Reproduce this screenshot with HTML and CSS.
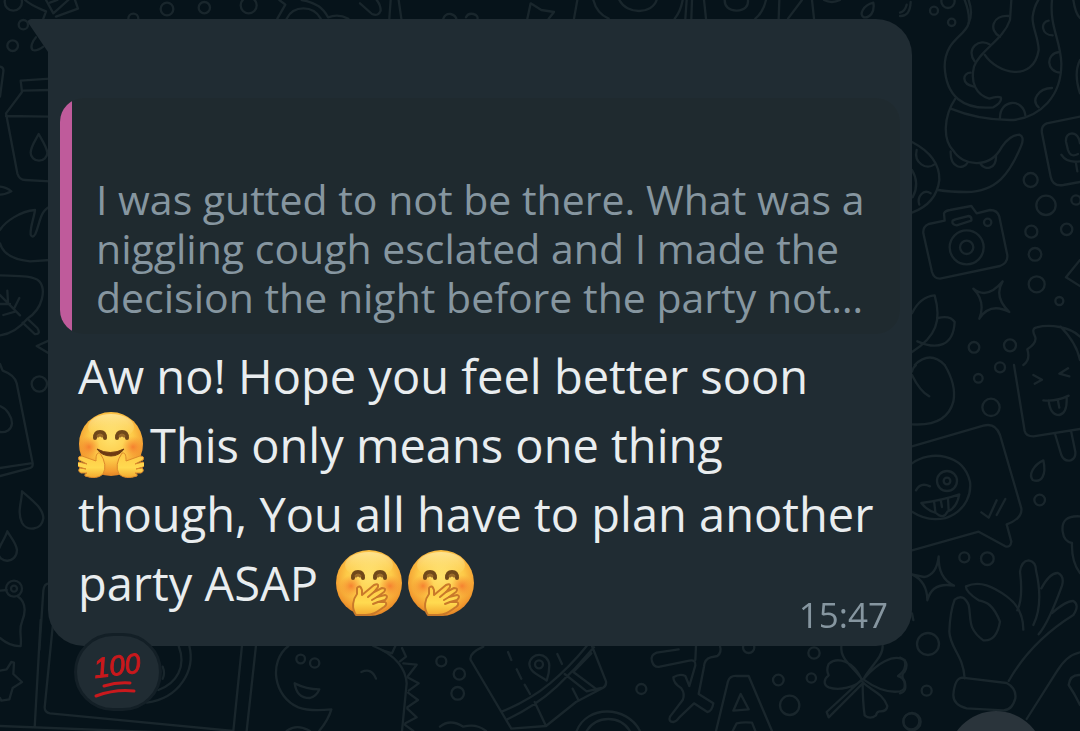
FILE: index.html
```html
<!DOCTYPE html>
<html lang="en">
<head>
  <meta charset="UTF-8"/>
  <meta name="viewport" content="width=device-width, initial-scale=1.0"/>
  <title>Chat</title>
  <link rel="stylesheet" href="styles.css">
</head>
<body>
  <!-- doodle wallpaper -->
  <svg class="wallpaper" viewBox="0 0 3240 2193" preserveAspectRatio="xMidYMid slice" aria-hidden="true">
    <!-- top left -->
    <g>
      <circle cx="40" cy="6" r="26"/><circle cx="70" cy="74" r="14"/><circle cx="38" cy="137" r="16"/>
      <path d="M75 0C95 18 115 24 138 34L130 56M138 0L160 40L205 0M150 8L172 0M225 0L234 26L168 50"/>
      <path d="M108 112C96 125 90 142 98 150C110 154 122 146 130 140"/>
      <circle cx="400" cy="56" r="15"/><circle cx="501" cy="27" r="19"/><circle cx="613" cy="23" r="17"/><circle cx="746" cy="16" r="24"/>
      <path d="M838 0L856 14L832 56M860 56C880 15 940 15 962 56M905 0C950 8 970 25 984 52C1010 42 1030 48 1045 56"/>
      <path d="M0 200Q12 202 10 215L0 290"/>
      <path d="M150 236L62 242L66 276L18 340L52 520Q58 540 76 540L150 544M66 272L150 270M18 348L150 350"/>
      <path d="M116 402C104 425 92 440 92 458A25 24 0 0 0 142 458C140 440 126 420 116 402Z"/>
      <path d="M0 560Q20 562 34 574Q16 584 0 584"/>
    </g>
    <!-- top middle -->
    <g transform="translate(1080 0)">
      <path d="M0 10L36 42Q56 50 62 32Q62 15 50 0M92 0L88 56M116 0L124 56M250 56Q256 40 272 42Q288 46 290 60M318 52Q324 38 340 42Q356 46 352 60"/>
      <path d="M502 56L512 10L544 30L582 36L566 56M652 0L642 56M700 0Q710 40 746 56M778 0C800 44 876 44 890 0M968 0Q962 34 944 56M980 0L976 56M996 0L994 56M1032 0L1038 56"/>
      <path d="M1094 0Q1094 30 1130 32Q1166 30 1164 0M1218 0Q1210 36 1186 56M1258 0L1256 56M1326 0L1284 56M1356 0L1362 56M1392 0Q1415 12 1440 0M1540 8C1510 15 1495 45 1512 52C1530 54 1545 36 1540 8Z"/>
    </g>
    <!-- left edge -->
    <g transform="translate(0 600)">
      <path d="M150 20C120 32 120 70 106 102Q98 116 92 104C90 80 102 55 105 30C60 34 15 65 0 90M0 130C10 165 50 180 90 184L150 180"/>
      <path d="M0 226C50 228 100 226 118 244C138 268 130 325 82 356C58 385 30 402 0 406M82 356L112 384Q124 404 104 402L68 368M0 285L60 346M24 306L22 272M42 326L58 294M0 312L30 312M10 345L48 334"/>
      <path d="M146 422L110 438L146 460"/><circle cx="118" cy="552" r="23"/>
      <path d="M0 492L8 512C30 520 45 530 50 550L98 790Q100 804 84 806L0 828M0 804Q50 796 92 790M0 618C20 625 36 650 36 670C34 690 18 698 0 696"/>
      <path d="M66 874C66 905 50 935 66 968C80 995 124 992 130 955C130 925 96 900 66 874Z"/>
      <path d="M22 994C14 1018 -4 1040 -6 1056C-4 1092 50 1092 51 1050C48 1028 32 1012 22 994Z"/>
      <circle cx="42" cy="1166" r="24"/><circle cx="42" cy="1166" r="9"/>
      <path d="M0 1172L20 1170M52 1188C78 1206 78 1235 66 1265C55 1290 66 1310 62 1338Q30 1340 0 1314"/>
      <path d="M148 1150Q132 1150 130 1172L118 1350"/>
    </g>
    <!-- bottom left -->
    <g transform="translate(0 1860)">
      <path d="M122 0L104 322M158 20L134 262Q134 278 150 280L700 333M0 318L560 340M700 333L726 76M740 333L768 76"/>
      <path d="M0 152L20 148L34 126L42 128L40 162L66 186L38 204L28 238L4 242L0 234"/>
      <path d="M536 78C560 140 530 190 475 210M568 78C586 150 540 235 440 248M488 140Q496 160 488 176"/>
      <path d="M865 78C805 125 820 230 895 262Q930 275 994 268Q985 300 958 332M1120 78C1190 105 1218 150 1220 190L1206 333"/>
      <circle cx="902" cy="117" r="13"/><circle cx="944" cy="129" r="14"/>
      <path d="M884 190Q890 235 930 234Q950 228 958 208Q920 208 884 190ZM1084 156Q1115 142 1128 176"/>
      <path d="M1150 92L1176 100L1186 78M1206 84L1218 110L1200 124M1210 130L1250 134L1224 168M1222 172L1256 190L1226 212M1224 218L1254 240L1222 262M1222 266L1250 292L1216 310M1214 314L1240 333"/>
      <path d="M860 333Q890 310 930 333"/>
      <circle cx="1324" cy="124" r="15"/><circle cx="1378" cy="162" r="17"/><circle cx="1373" cy="220" r="19"/>
    </g>
    <!-- bottom middle -->
    <g transform="translate(1320 1860)">
      <path d="M130 80Q86 100 92 120L214 326L318 318L408 246L488 204Q500 198 498 184L456 78M185 275Q270 240 330 190T440 78M202 298Q290 256 350 200T462 82M374 162L440 214L484 204M400 156L454 100M400 156L470 208M318 318Q300 280 284 246M204 96L214 120M230 148L244 176M254 194L270 222M352 102L366 132M398 206L414 238"/>
      <path d="M320 182C300 165 270 160 268 132C272 95 325 95 328 136Q328 160 320 182Z"/><circle cx="297" cy="133" r="12"/>
      <path d="M410 333C440 255 560 255 600 333M440 333C470 285 540 285 570 333M0 320Q30 295 70 320Q110 310 138 333"/>
      <circle cx="604" cy="207" r="15"/>
      <path d="M716 88L650 98Q630 105 636 124Q642 144 660 140L748 122Q768 118 766 136L748 198L736 168Q720 160 700 172Q700 190 724 205Q736 222 728 240L690 290Q684 306 700 306Q710 304 718 292L762 250L802 276Q816 274 820 250L776 222L792 140Q794 116 812 112L832 108Q846 98 840 78"/>
      <path d="M828 333L864 184Q870 166 890 168L926 168L996 333M902 222L880 272L926 268ZM878 333L890 310Q910 305 936 308L946 333M768 78L766 120"/>
      <circle cx="1015" cy="180" r="16"/><circle cx="1114" cy="174" r="14"/><circle cx="1122" cy="99" r="17"/><circle cx="1049" cy="256" r="29"/><circle cx="926" cy="82" r="17"/><circle cx="1414" cy="304" r="24"/>
      <path d="M1266 178L1160 276L1166 292L1268 190M1266 178C1240 140 1200 120 1204 78M1270 178C1290 140 1330 110 1328 78M1266 180C1240 120 1190 110 1166 132Q1158 150 1166 166C1150 178 1150 195 1166 202C1200 214 1245 200 1266 180M1270 178C1310 130 1360 100 1394 120Q1402 150 1374 168C1400 175 1400 210 1380 214C1340 220 1300 200 1270 178M1268 186C1268 220 1270 260 1274 286Q1290 300 1308 286Q1310 275 1318 274Q1340 276 1342 258C1330 220 1290 210 1268 186"/>
    </g>
    <!-- top right -->
    <g transform="translate(2700 0)">
      <path d="M0 48Q30 50 32 6M0 38Q15 34 20 14"/>
      <circle cx="102" cy="32" r="12"/><circle cx="144" cy="4" r="20"/><circle cx="155" cy="67" r="11"/>
      <path d="M194 0Q210 40 206 70C195 110 134 120 134 200C138 290 190 330 280 322Q308 305 302 292Q290 288 268 296C230 285 210 250 222 200C240 150 310 120 330 60L334 0"/>
      <path d="M206 70Q220 40 206 0M254 164C290 220 400 250 416 150C415 110 395 80 398 50Q402 20 415 0M456 0C448 80 482 120 484 190C485 290 420 350 340 360Q240 362 152 326M166 296C130 350 128 420 160 452C190 500 270 508 306 440Q330 405 358 404Q374 410 364 436C330 520 290 575 200 576Q150 576 114 570"/>
      <path d="M326 48C278 44 264 90 300 110M270 134C240 112 195 145 224 184M212 218C188 218 182 252 222 260M446 62C420 65 424 106 458 106M478 156C436 160 438 216 482 218M456 264C415 265 392 300 416 322M300 356C298 296 370 294 376 346M152 454C150 505 190 512 204 486M242 492C255 512 290 508 288 466"/>
      <path d="M36 426Q120 470 118 540Q110 610 36 638M50 450C40 490 80 510 102 494M36 510Q60 550 38 592M92 580C70 566 50 590 58 614"/>
      <path d="M540 350L440 370Q422 378 426 400L452 530Q458 560 490 555L540 546M516 400Q496 402 498 425L504 450Q512 474 534 462M516 400Q536 402 540 430M484 464Q500 490 540 484M528 490L532 514M520 0Q526 40 540 54M540 180Q520 220 540 280"/>
      <path d="M134 662L132 640Q136 632 150 630L214 618L230 640L270 630Q292 630 298 650L322 766Q324 788 300 798L120 836Q102 836 96 816L70 700Q68 680 86 672ZM166 658L206 648Q216 650 214 662L170 676Q154 674 158 662Z"/>
      <circle cx="200" cy="742" r="51"/><circle cx="200" cy="742" r="20"/><circle cx="263" cy="667" r="11"/>
      <circle cx="392" cy="540" r="21"/><circle cx="438" cy="616" r="29"/><circle cx="394" cy="695" r="18"/><circle cx="500" cy="688" r="17"/><circle cx="528" cy="600" r="14"/><circle cx="405" cy="763" r="19"/><circle cx="410" cy="853" r="24"/><circle cx="478" cy="903" r="12"/><circle cx="222" cy="1042" r="16"/><circle cx="330" cy="1036" r="18"/><circle cx="300" cy="1102" r="15"/>
      <path d="M220 866Q262 900 308 844Q280 890 328 936Q270 906 238 956Q258 905 220 866ZM540 780L498 832L540 858"/>
      <path d="M36 940Q60 890 104 886C125 960 110 1010 36 1056M114 954Q150 945 164 966C160 1040 110 1050 52 1024M44 1095Q90 1050 134 1095"/>
      <path d="M370 1095Q392 1080 382 1048Q410 1030 406 1012Q392 985 410 982C450 972 510 980 540 1010M482 980Q530 1030 540 1080"/>
    </g>
    <!-- bottom right -->
    <g transform="translate(2700 1095)">
      <path d="M36 30Q60 80 88 94M134 0Q170 60 160 110Q140 185 36 178M36 20Q38 8 48 0"/>
      <circle cx="235" cy="40" r="13"/><circle cx="273" cy="127" r="26"/><circle cx="193" cy="577" r="15"/><circle cx="262" cy="581" r="19"/><circle cx="419" cy="405" r="16"/><circle cx="84" cy="837" r="33"/><circle cx="80" cy="977" r="15"/><circle cx="36" cy="1070" r="26"/>
      <path d="M342 0L374 198Q378 214 400 214L540 192M400 30L426 44L404 56M504 10L478 26L508 34M430 106Q470 110 506 92M446 106Q450 150 478 150Q502 145 500 98M474 108L478 128M466 210L484 270Q492 290 512 286Q528 280 526 260L514 202"/>
      <path d="M36 244L250 182Q286 172 300 210L364 430Q368 460 320 478L334 530Q332 548 316 544L236 500L36 556"/>
      <path d="M36 295C90 255 190 265 210 350C220 430 130 500 36 440"/>
      <circle cx="141" cy="348" r="30"/><circle cx="141" cy="348" r="10"/>
      <path d="M48 376Q62 350 90 364M64 414Q130 405 178 388Q170 430 142 440Q130 465 108 444Q80 436 64 414ZM102 408L106 440M122 404L126 426M144 400L146 438M244 442L266 458L290 406M290 450L316 402"/>
      <path d="M430 286C400 300 385 330 398 345C425 355 440 330 430 286Z"/>
      <path d="M36 628L72 636Q110 630 116 574Q114 640 162 662Q96 650 82 706Q82 650 36 628Z"/>
      <path d="M194 940C190 870 150 850 148 800Q150 740 164 704Q190 684 206 720C215 760 200 790 250 826Q290 830 300 770C280 720 260 710 236 706Q196 680 198 664C240 645 280 665 320 694Q370 730 370 794"/>
      <path d="M352 736Q370 700 360 620Q364 588 386 586Q408 590 408 616C425 690 420 740 400 780M424 670Q450 622 474 624Q494 634 486 662C465 720 440 780 416 808M456 744Q500 706 520 708Q540 720 520 750C440 800 370 870 326 948"/>
      <path d="M186 938L320 954Q350 970 346 1000Q336 1036 310 1036L200 1030Q160 1020 160 990Q164 940 186 938ZM380 1062L470 920Q500 870 540 862M540 930Q510 928 506 960Q526 990 540 1020M540 454Q482 450 488 500Q492 530 516 534Q514 590 540 624M0 878Q30 890 14 920Q0 930 14 950Q22 980 0 985M36 745L40 765"/>
    </g>
  </svg>

  <!-- emoji shapes shared by the message text -->
  <svg class="defs" aria-hidden="true">
    <defs>
      <radialGradient id="face" cx="50%" cy="40%" r="62%">
        <stop offset="0" stop-color="#ffe26c"/>
        <stop offset="0.55" stop-color="#fdca48"/>
        <stop offset="0.85" stop-color="#f39c30"/>
        <stop offset="1" stop-color="#dc7c22"/>
      </radialGradient>
      <linearGradient id="shine" x1="0" y1="0" x2="0" y2="1">
        <stop offset="0" stop-color="#fff6c4" stop-opacity="0.6"/>
        <stop offset="1" stop-color="#ffe777" stop-opacity="0"/>
      </linearGradient>
      <radialGradient id="blush">
        <stop offset="0" stop-color="#f4702a" stop-opacity="0.8"/>
        <stop offset="1" stop-color="#f4862a" stop-opacity="0"/>
      </radialGradient>
      <linearGradient id="hand" x1="0" y1="0" x2="0" y2="1">
        <stop offset="0" stop-color="#ffc845"/>
        <stop offset="0.6" stop-color="#ffda50"/>
        <stop offset="1" stop-color="#f3a92f"/>
      </linearGradient>

      <g id="eyes" fill="none" stroke="#70481a" stroke-width="4" stroke-linecap="round">
        <path d="M18 27Q18 21 23 21Q28 21 28 27"/>
        <path d="M40 27Q40 21 45 21Q50 21 50 27"/>
        <path d="M21 25Q23 23 25 25M43 25Q45 23 47 25" stroke="#9a6a2a" stroke-width="3"/>
      </g>

      <symbol id="hug" viewBox="0 0 66 66">
        <circle cx="33" cy="32" r="32" fill="url(#face)"/>
        <ellipse cx="33" cy="15" rx="23" ry="13" fill="url(#shine)"/>
        <circle cx="11" cy="35" r="11" fill="url(#blush)"/>
        <circle cx="55" cy="35" r="11" fill="url(#blush)"/>
        <use href="#eyes" x="-1" y="-1"/>
        <path d="M19 37Q32 44 46 37Q41 44 33 44Q24 44 19 37Z" fill="#6d3a12" stroke="#6d3a12" stroke-linejoin="round"/>
        <path id="palm" d="M22 41C18 40 18 45 18 49L4 44Q-1 44 1 48L9 52L1 50Q-3 52 1 55L8 57L2 56Q-1 59 3 61L9 61Q6 62 7 64Q19 68 25 62Q30 53 22 41Z" fill="url(#hand)" stroke="#dd8a2c" stroke-width="1"/>
        <use href="#palm" transform="translate(66 0) scale(-1 1)"/>
      </symbol>

      <symbol id="giggle" viewBox="0 0 66 66">
        <circle cx="33" cy="33" r="33" fill="url(#face)"/>
        <ellipse cx="33" cy="15" rx="24" ry="13" fill="url(#shine)"/>
        <circle cx="15" cy="36" r="11" fill="url(#blush)"/>
        <circle cx="54" cy="36" r="11" fill="url(#blush)"/>
        <use href="#eyes" x="-1" y="1"/>
        <path d="M20 65C15 58 17 49 21 44L21 38Q24 34 26 40L26 45L38 35Q43 33 42 37L38 42L46 38Q51 38 48 42L41 47L49 45Q53 46 49 50L42 52L49 52Q52 54 48 57C42 61 38 65 30 65Z" fill="url(#hand)" stroke="#c9792a" stroke-width="2" stroke-linejoin="round"/>
        <path d="M38 42L32 47M41 47L36 50M42 52L37 54" fill="none" stroke="#c9792a" stroke-width="2" stroke-linecap="round"/>
      </symbol>
    </defs>
  </svg>

  <main class="chat">
    <article class="bubble">
      <svg class="tail" viewBox="0 0 20 33" aria-hidden="true"><path d="M20 0H3Q-2 1 1 5L20 33Z"/></svg>

      <blockquote class="quote">
        <p>I was gutted to not be there. What was a<br>niggling cough esclated and I made the<br>decision the night before the party not…</p>
      </blockquote>

      <div class="content">
        <p class="message">Aw no! Hope you feel better soon<br><svg class="emoji emoji-hug" role="img" aria-label="hugging face"><use href="#hug"/></svg>This only means one thing<br>though, You all have to plan another<br>party ASAP <svg class="emoji emoji-giggle" role="img" aria-label="giggling face"><use href="#giggle"/></svg><svg class="emoji emoji-giggle" role="img" aria-label="giggling face"><use href="#giggle"/></svg></p>
        <time class="time" datetime="15:47">15:47</time>
      </div>
    </article>

    <button class="reaction" type="button">
      <svg class="hundred" viewBox="0 0 50 50">
        <text x="2" y="31" transform="rotate(-7 2 31)">100</text>
        <path d="M11 39Q24 35 37 36M3 49Q22 42 41 44"/>
      </svg>
    </button>
  </main>

  <button class="scroll-down" type="button" aria-label="Scroll to bottom"></button>
</body>
</html>
```

FILE: styles.css
```css
* {
  box-sizing: border-box;
  padding: 0;
  margin: 0;
}

body {
  font-family: 'Open Sans', 'Noto Sans', sans-serif;
  background: #06131a;
  min-height: 100vh;
  overflow: hidden;
}

button {
  border: none;
  cursor: pointer;
}

.wallpaper {
  position: fixed;
  inset: 0;
  width: 100%;
  height: 100%;
  z-index: -1;
  fill: none;
  stroke: #19262c;
  stroke-width: 7;
  stroke-linejoin: round;
  stroke-linecap: round;
}

.defs {
  position: absolute;
  width: 0;
  height: 0;
}

.chat {
  padding: 19px 48px;
}

/* message bubble */
.bubble {
  position: relative;
  width: 88%;
  max-width: 864px;
  padding: 79px 12px 9px;
  background: #202c33;
  border-radius: 0 36px 36px 36px;
}

.tail {
  position: absolute;
  top: 0;
  left: -20px;
  width: 20px;
  height: 33px;
  fill: #202c33;
}

/* the accent bar is part of the background so its inner edge stays straight */
.quote {
  padding: 77px 24px 12px 36px;
  background: linear-gradient(to right, #bf5b9b 12px, #1f2a2f 12px);
  border-radius: 24px;
  color: #8696a0;
  font-size: 41px;
  line-height: 49px;
  white-space: nowrap;
}

.content {
  display: grid;
  padding: 8px 12px 0 18px;
}

.message,
.time {
  grid-area: 1 / 1;
}

.message {
  padding-bottom: 19px;
  color: #e9edef;
  font-size: 47px;
  line-height: 69px;
  white-space: nowrap;
}

.emoji {
  width: 66px;
  height: 66px;
  vertical-align: -15px;
}

.emoji-hug {
  margin-right: 6px;
}

.emoji-giggle {
  margin-left: 6px;
}

.time {
  align-self: end;
  justify-self: end;
  color: #8696a0;
  font-size: 35px;
  line-height: 44px;
}

.reaction {
  position: relative;
  display: grid;
  place-items: center;
  width: 88px;
  height: 78px;
  margin: -13px 0 0 26px;
  background: #202c33;
  border: 3px solid #131f26;
  border-radius: 39px;
}

.hundred {
  width: 50px;
  height: 50px;
  overflow: visible;
  fill: none;
  stroke: #c9191d;
  stroke-width: 3;
  stroke-linecap: round;
}

.hundred text {
  fill: #c9191d;
  stroke-width: 1;
  font-family: 'Liberation Sans', sans-serif;
  font-size: 28px;
  font-style: italic;
}

.scroll-down {
  position: fixed;
  right: 36px;
  bottom: -76px;
  width: 96px;
  height: 96px;
  background: #2a343b;
  border-radius: 50%;
}
```
